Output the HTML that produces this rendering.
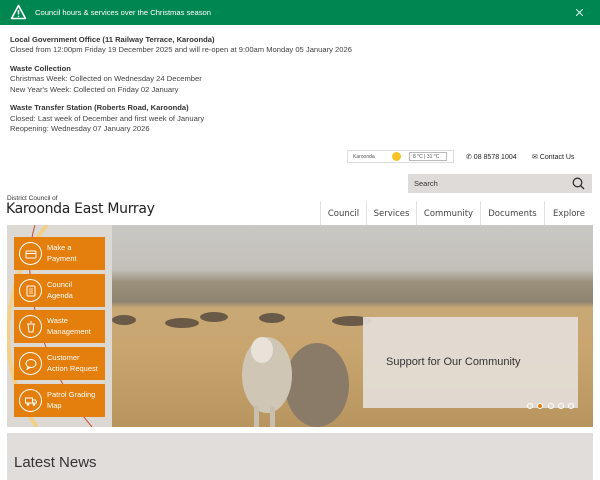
<!DOCTYPE html>
<html><head><meta charset="utf-8"><style>
*{margin:0;padding:0;box-sizing:border-box}
body{width:600px;height:480px;overflow:hidden;background:#fff;font-family:"Liberation Sans",sans-serif;position:relative;color:#333}
.a{position:absolute}
.ban{left:0;top:0;width:600px;height:25px;background:#008751;color:#fff;font-size:7.6px}
.al p{font-size:7.6px;line-height:10.3px;color:#444}
.al b{color:#333}
.btn{position:absolute;left:14px;width:91px;height:33px;background:#e47e0c;color:#fff;font-size:7.5px;line-height:10.5px}
.btn .c{position:absolute;left:5px;top:5px;width:23px;height:23px;border:1px solid #fff;border-radius:50%}
.btn .c svg{position:absolute;left:5px;top:5px}
.btn span{position:absolute;left:33px;top:6px}
.nav{top:201px;height:24px;font-family:"DejaVu Sans",sans-serif;font-size:8.5px;color:#444;border-left:1px solid #e3e1de;text-align:center;line-height:26px}
.dot{position:absolute;top:403px;width:6px;height:6px;border:1px solid #fff;border-radius:50%}
</style></head><body>
<div class="a ban">
<svg class="a" style="left:10px;top:4px" width="17" height="16" viewBox="0 0 17 16"><path d="M8.5 1.5L15.5 14.5H1.5Z" fill="none" stroke="#fff" stroke-width="1.6" stroke-linejoin="round"/><path d="M8.5 6v4.5M8.5 11.8v1" stroke="#fff" stroke-width="1.5"/></svg>
<div class="a" style="left:35px;top:8px">Council hours &amp; services over the Christmas season</div>
<svg class="a" style="left:576px;top:9px" width="7" height="7" viewBox="0 0 7 7"><path d="M0 0L7 7M7 0L0 7" stroke="#dfe" stroke-width="1"/></svg>
</div>
<div class="a al" style="left:10px;top:35px">
<p><b>Local Government Office (11 Railway Terrace, Karoonda)</b></p>
<p>Closed from 12:00pm Friday 19 December 2025 and will re-open at 9:00am Monday 05 January 2026</p>
<p style="margin-top:8.5px"><b>Waste Collection</b></p>
<p>Christmas Week: Collected on Wednesday 24 December</p>
<p>New Year's Week: Collected on Friday 02 January</p>
<p style="margin-top:8.5px"><b>Waste Transfer Station (Roberts Road, Karoonda)</b></p>
<p>Closed: Last week of December and first week of January</p>
<p>Reopening: Wednesday 07 January 2026</p>
</div>
<div class="a" style="left:347px;top:150px;width:107px;height:13px;border:1px solid #ddd;font-size:5px;color:#555">
<span class="a" style="left:5px;top:3px">Karoonda</span>
<span class="a" style="left:44px;top:1px;width:9px;height:9px;border-radius:50%;background:#f7c325"></span>
<span class="a" style="left:61px;top:1px;width:38px;height:9px;border:1px solid #bbb;padding:1px 3px">8 °C | 31 °C</span>
</div>
<div class="a" style="left:466px;top:153px;font-size:7px;color:#222">✆ 08 8578 1004</div>
<div class="a" style="left:532px;top:153px;font-size:7px;color:#222">✉ Contact Us</div>
<div class="a" style="left:408px;top:174px;width:184px;height:19px;background:#dedbd8;font-size:7.5px;line-height:19px;padding-left:6px;color:#333">Search
<svg class="a" style="right:7px;top:3px" width="13" height="13" viewBox="0 0 13 13"><circle cx="5.5" cy="5.5" r="4.3" fill="none" stroke="#333" stroke-width="1.3"/><path d="M8.6 8.6L12 12" stroke="#333" stroke-width="1.4"/></svg></div>
<div class="a" style="left:7px;top:195px;font-size:6.5px;color:#333">District Council of</div>
<div class="a" style="left:6px;top:201px;font-size:14px;font-family:'DejaVu Sans',sans-serif;color:#222;letter-spacing:-0.3px">Karoonda East Murray</div>
<div class="a nav" style="left:320px;width:46px">Council</div>
<div class="a nav" style="left:366px;width:50px">Services</div>
<div class="a nav" style="left:416px;width:64px">Community</div>
<div class="a nav" style="left:480px;width:64px">Documents</div>
<div class="a nav" style="left:544px;width:49px">Explore</div>
<div class="a" style="left:7px;top:225px;width:105px;height:202px;background:#dcd9d4;overflow:hidden">
<svg width="105" height="202"><path d="M40 0 C-10 60 -10 150 30 202" stroke="#f2d08a" stroke-width="4" fill="none"/><path d="M28 0 C10 60 40 150 85 202" stroke="#c84a2a" stroke-width="1" fill="none"/></svg></div>
<div class="a" style="left:112px;top:225px;width:481px;height:202px;overflow:hidden;background:linear-gradient(#c9c8c4 0%,#c3c0ba 22%,#9c917d 28%,#8e8470 38%,#c8a875 41%,#c9a670 60%,#b8955f 100%)">
<svg class="a" style="left:0;top:0" width="481" height="202">
<g fill="#4a4038" opacity=".75"><ellipse cx="70" cy="98" rx="17" ry="5"/><ellipse cx="102" cy="92" rx="14" ry="5"/><ellipse cx="160" cy="93" rx="13" ry="5"/><ellipse cx="240" cy="96" rx="20" ry="5"/><ellipse cx="12" cy="95" rx="12" ry="5"/></g>
<ellipse cx="205" cy="160" rx="32" ry="42" fill="#8a7b68"/>
<ellipse cx="155" cy="150" rx="25" ry="38" fill="#cfc6b6"/>
<ellipse cx="150" cy="125" rx="11" ry="13" fill="#e8e2d8"/>
<rect x="158" y="182" width="5" height="20" fill="#c8bfae"/><rect x="142" y="180" width="5" height="22" fill="#c8bfae"/>
</svg>
</div>
<div class="a" style="left:363px;top:317px;width:215px;height:91px;background:rgba(228,224,218,.9)">
<div class="a" style="left:23px;top:39px;font-size:11px;color:#333">Support for Our Community</div></div>
<div class="dot" style="left:527px"></div><div class="dot" style="left:537px;background:#e47e0c"></div><div class="dot" style="left:548px"></div><div class="dot" style="left:558px"></div><div class="dot" style="left:568px"></div>
<div class="btn" style="top:237px"><div class="c"><svg width="12" height="12"><rect x="1" y="3" width="10" height="7" rx="1" fill="none" stroke="#fff"/><path d="M1 5.5h10" stroke="#fff"/></svg></div><span>Make a<br>Payment</span></div>
<div class="btn" style="top:274px"><div class="c"><svg width="12" height="12"><rect x="2" y="1" width="8" height="10" rx="1" fill="none" stroke="#fff"/><path d="M4 4h4M4 6h4M4 8h4" stroke="#fff" stroke-width=".7"/></svg></div><span>Council<br>Agenda</span></div>
<div class="btn" style="top:310px"><div class="c"><svg width="12" height="12"><path d="M2 3h8M3 3l1 8h4l1-8M5 1h2" fill="none" stroke="#fff"/></svg></div><span>Waste<br>Management</span></div>
<div class="btn" style="top:347px"><div class="c"><svg width="12" height="12"><ellipse cx="6" cy="5.5" rx="5" ry="4" fill="none" stroke="#fff"/><path d="M3 9l-1 2.5 3-2" fill="none" stroke="#fff"/></svg></div><span>Customer<br>Action Request</span></div>
<div class="btn" style="top:384px"><div class="c"><svg width="12" height="12"><rect x="0.5" y="3" width="7" height="5" fill="none" stroke="#fff"/><path d="M7.5 5h3l1 2v1h-4" fill="none" stroke="#fff"/><circle cx="3" cy="9.5" r="1.3" fill="#fff"/><circle cx="9" cy="9.5" r="1.3" fill="#fff"/></svg></div><span>Patrol Grading<br>Map</span></div>
<div class="a" style="left:7px;top:433px;width:586px;height:47px;background:#e0ddda">
<div class="a" style="left:7px;top:21px;font-size:15px;color:#333">Latest News</div></div>
</body></html>
